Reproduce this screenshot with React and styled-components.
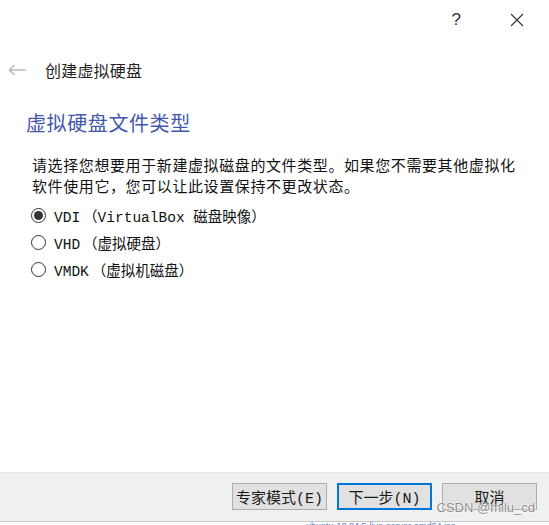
import styled, { createGlobalStyle } from "styled-components";

const GlobalStyle = createGlobalStyle`
    html, body {
        margin: 0;
        padding: 0;
        background: #ffffff;
    }
    * {
        box-sizing: border-box;
    }
`;

const options = [
    { id: "vdi", code: "VDI", desc: "（VirtualBox 磁盘映像）", checked: true },
    { id: "vhd", code: "VHD", desc: "（虚拟硬盘）", checked: false },
    { id: "vmdk", code: "VMDK", desc: "（虚拟机磁盘）", checked: false },
];

export default function App() {
    return (
        <>
            <GlobalStyle />
            <Dialog>
                <TitleBar>
                    <HelpButton>?</HelpButton>
                    <CloseButton>
                        <svg width="14" height="14" viewBox="0 0 14 14">
                            <path d="M1 1 L13 13 M13 1 L1 13" stroke="#333" strokeWidth="1.1" fill="none" />
                        </svg>
                    </CloseButton>
                </TitleBar>
                <Header>
                    <BackArrow>
                        <svg width="19" height="12" viewBox="0 0 19 12">
                            <path d="M1.5 6 H18 M6.5 1 L1.5 6 L6.5 11" stroke="#bcbcbc" strokeWidth="1.6" fill="none" />
                        </svg>
                    </BackArrow>
                    <WizardTitle>创建虚拟硬盘</WizardTitle>
                </Header>
                <Content>
                    <PageTitle>虚拟硬盘文件类型</PageTitle>
                    <Description>
                        请选择您想要用于新建虚拟磁盘的文件类型。如果您不需要其他虚拟化软件使用它，您可以让此设置保持不更改状态。
                    </Description>
                    <OptionList>
                        {options.map((o) => (
                            <Option key={o.id}>
                                <Radio $checked={o.checked} />
                                <OptionLabel>
                                    {o.code}
                                    <OptionDesc>{o.desc}</OptionDesc>
                                </OptionLabel>
                            </Option>
                        ))}
                    </OptionList>
                </Content>
                <Footer>
                    <Button>专家模式(E)</Button>
                    <Button $primary>下一步(N)</Button>
                    <Button>取消</Button>
                    <Watermark>CSDN @milu_cd</Watermark>
                </Footer>
                <BelowStrip>ubuntu-18.04.5-live-server-amd64.iso</BelowStrip>
            </Dialog>
        </>
    );
}

const Dialog = styled.div`
    width: 549px;
    height: 525px;
    background: #ffffff;
    display: flex;
    flex-direction: column;
    font-family: "Noto Sans CJK SC", "Noto Sans", sans-serif;
    color: #1a1a1a;
    overflow: hidden;
`;

const TitleBar = styled.div`
    height: 40px;
    display: flex;
    justify-content: flex-end;
    align-items: center;
    padding-right: 25px;
    gap: 49px;
`;

const HelpButton = styled.span`
    font-family: "Liberation Sans", sans-serif;
    font-size: 17px;
    color: #333;
    margin-top: -1px;
`;

const CloseButton = styled.span`
    display: flex;
    margin-top: -1px;
`;

const Header = styled.div`
    display: flex;
    align-items: center;
    padding: 16px 0 0 8px;
    height: 44px;
`;

const BackArrow = styled.span`
    display: flex;
    width: 37px;
    margin-top: -1px;
`;

const WizardTitle = styled.h1`
    margin: 0;
    font-size: 16px;
    font-weight: 400;
    letter-spacing: 0.2px;
    color: #1f1f1f;
`;

const Content = styled.div`
    flex: 1;
    padding: 25px 20px 0 26px;
`;

const PageTitle = styled.h2`
    margin: 0;
    font-size: 20px;
    font-weight: 400;
    letter-spacing: 0.6px;
    line-height: 28px;
    color: #4358ad;
`;

const Description = styled.p`
    margin: 17px 0 0 6px;
    font-size: 15px;
    line-height: 21px;
    letter-spacing: 0.6px;
    color: #111;
`;

const OptionList = styled.div`
    display: flex;
    flex-direction: column;
    gap: 6px;
    margin: 9px 0 0 5px;
`;

const Option = styled.label`
    display: flex;
    align-items: center;
    gap: 8px;
    height: 21px;
`;

const Radio = styled.span`
    width: 15px;
    height: 15px;
    border-radius: 50%;
    border: 1px solid #333;
    display: flex;
    align-items: center;
    justify-content: center;
    &::after {
        content: "";
        width: 9px;
        height: 9px;
        border-radius: 50%;
        background: #333;
        display: ${(p) => (p.$checked ? "block" : "none")};
    }
`;

const OptionLabel = styled.span`
    font-family: "Liberation Mono", "Noto Sans CJK SC", monospace;
    font-size: 14.5px;
    color: #111;
`;

const OptionDesc = styled.span`
    margin-left: 3px;
`;

const Footer = styled.div`
    position: relative;
    height: 49px;
    background: #f0f0f0;
    border-top: 1px solid #e3e3e3;
    display: flex;
    justify-content: flex-end;
    align-items: flex-start;
    gap: 10px;
    padding: 10px 12px 0 0;
`;

const Button = styled.button`
    width: 95px;
    height: 27px;
    background: #e1e1e1;
    border: ${(p) => (p.$primary ? "2px solid #0078d7" : "1px solid #adadad")};
    font-family: "Liberation Mono", "Noto Sans CJK SC", monospace;
    font-size: 15px;
    color: #1a1a1a;
    padding: 0;
    display: flex;
    align-items: center;
    justify-content: center;
`;

const Watermark = styled.span`
    position: absolute;
    right: 14px;
    bottom: 6px;
    font-family: "Liberation Sans", sans-serif;
    font-size: 13px;
    color: #8f8f8f;
    text-shadow: 0 0 2px #ffffff, 0 0 2px #ffffff;
`;

const BelowStrip = styled.div`
    height: 4px;
    overflow: hidden;
    padding-left: 306px;
    font-family: "Liberation Sans", sans-serif;
    font-size: 9px;
    line-height: 9px;
    color: #5b7ccd;
    background: #ffffff;
    border-top: 1px solid #c8c8c8;
`;
